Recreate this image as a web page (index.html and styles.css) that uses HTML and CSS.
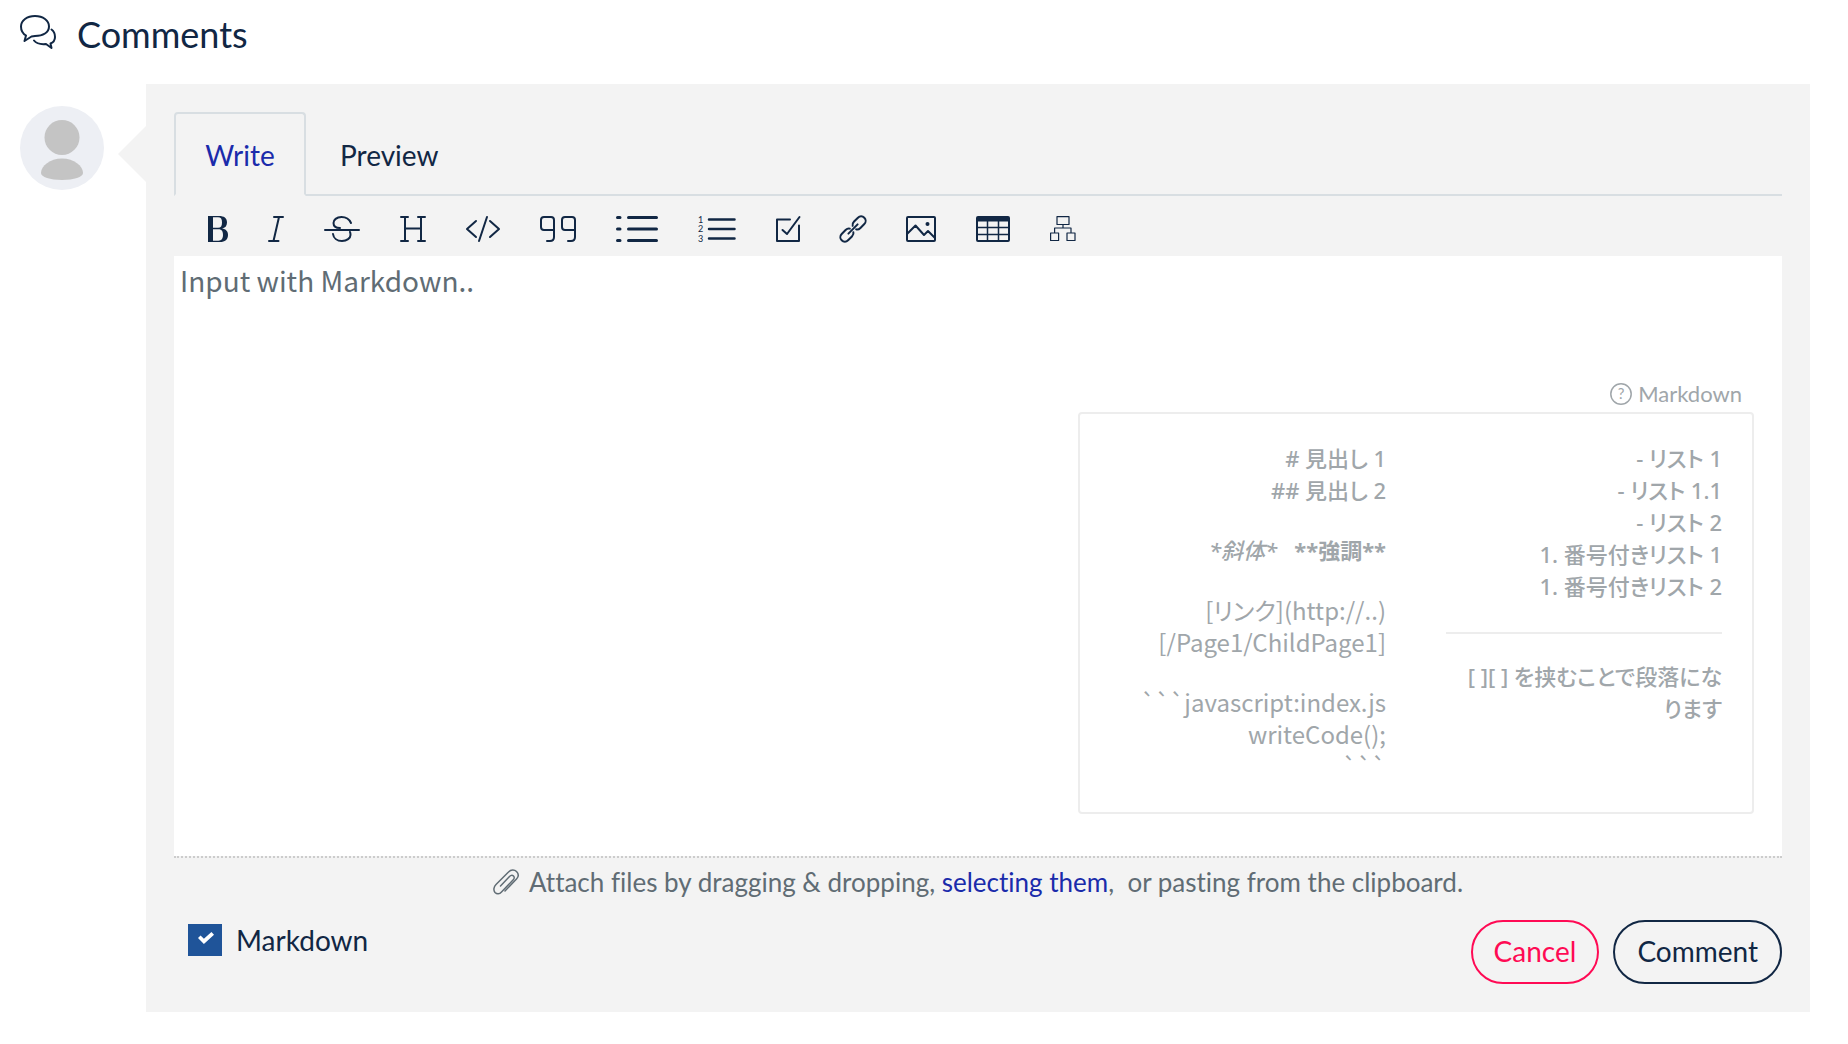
FILE: index.html
```html
<!DOCTYPE html>
<html lang="en">
<head>
<meta charset="utf-8">
<meta name="viewport" content="width=device-width, initial-scale=1">
<title>Comments</title>
<link rel="stylesheet" href="styles.css">
</head>
<body>
<main class="comments">
  <h1 class="comments-title">
    <svg class="icon" width="36" height="34" viewBox="0 0 36 34" stroke-width="2" aria-hidden="true">
      <path d="M6 20.5C2.5 18.5 1 15 1 11.500C1 5.500 7 1 15 1S29 5.500 29 11.500S23 21 15 21L11.500 21.500L4.500 26L6 20.500"/>
      <path d="M31.500 14.500C34.500 16.500 35 20 35 22C35 25 33 27.500 30.500 28.500L31.500 33L26 29C21 29.500 16 28 14 25.500"/>
    </svg>
    Comments
  </h1>
  <div class="comment-entry">
    <svg class="avatar" width="84" height="84" viewBox="0 0 84 84" role="img" aria-label="User">
      <circle cx="42" cy="42" r="42" fill="#edeff4"/>
      <circle cx="42" cy="31.500" r="17.500" fill="#c4c4c4"/>
      <path d="M42 52.500C54 52.500 63 60 63 67C63 71 54 74 42 74S21 71 21 67C21 60 30 52.500 42 52.500Z" fill="#c4c4c4"/>
    </svg>
    <form class="comment-form">
      <div class="tabs" role="tablist">
        <button type="button" class="tab tab-active" role="tab" aria-selected="true">Write</button>
        <button type="button" class="tab" role="tab" aria-selected="false">Preview</button>
      </div>
      <div class="toolbar" role="toolbar" aria-label="Formatting">
        <button type="button" class="tool" aria-label="Bold"><svg class="icon" width="20" height="26" viewBox="0 0 20 26"><path fill="currentColor" fill-rule="evenodd" stroke="none" d="M0 0H11C16 0 19 2 19 6.500C19 10 17 12 14 12.500C18 13 20 15.500 20 19C20 23.500 17 26 12 26H0ZM5 1.300H10C13 1.300 14 3 14 6.500C14 10 13 11.800 10 11.800H5ZM5 13.200H10.500C14 13.200 15 15.500 15 19C15 22.500 13.500 24.700 10.500 24.700H5Z"/></svg></button>
        <button type="button" class="tool" aria-label="Italic"><svg class="icon" width="16" height="26" viewBox="0 0 16 26" stroke-width="2"><path d="M6 1H15M1 25H10.500M11 1L5.500 25"/></svg></button>
        <button type="button" class="tool" aria-label="Strikethrough"><svg class="icon" width="36" height="26" viewBox="0 0 36 26" stroke-width="2"><path d="M1 14H35M27 7C25 2.500 21 1 17.500 1C12.500 1 9.500 4 9.500 7C9.500 10 12 12 16 12M9 18C9.500 22 13 25 18 25C23 25 26.500 22 26.500 19C26.500 18 26.500 17 26 16"/></svg></button>
        <button type="button" class="tool" aria-label="Heading"><svg class="icon" width="26" height="26" viewBox="0 0 26 26" stroke-width="2"><path d="M1 1H8M18 1H25M1 25H8M18 25H25M5 1V25M21 1V25M5 12.500H21"/></svg></button>
        <button type="button" class="tool" aria-label="Code"><svg class="icon" width="34" height="26" viewBox="0 0 34 26" stroke-width="2"><path d="M10 5L1 13L10 21M21 1L13 25M24 5L33 13L24 21"/></svg></button>
        <button type="button" class="tool" aria-label="Quote"><svg class="icon" width="36" height="26" viewBox="0 0 36 26" stroke-width="2"><path d="M14 14H4Q1 14 1 11V4Q1 1 4 1H11Q14 1 14 4V21Q14 25 10 25H7M35 14H25Q22 14 22 11V4Q22 1 25 1H32Q35 1 35 4V21Q35 25 31 25H28"/></svg></button>
        <button type="button" class="tool" aria-label="Bulleted list"><svg class="icon" width="42" height="26" viewBox="0 0 42 26" stroke-width="3"><path d="M1.500 1.500H4M1.500 13H4M1.500 24.500H4M12.500 1.500H40.500M12.500 13H40.500M12.500 24.500H40.500"/></svg></button>
        <button type="button" class="tool" aria-label="Numbered list"><svg class="icon" width="38" height="26" viewBox="0 0 38 26" stroke-width="2.500"><path d="M11 3.500H36.500M11 13H36.500M11 22.500H36.500"/><g class="icon-digits"><text x="0" y="7">1</text><text x="0" y="16">2</text><text x="0" y="26">3</text></g></svg></button>
        <button type="button" class="tool" aria-label="Task list"><svg class="icon" width="24" height="26" viewBox="0 0 24 26" stroke-width="2"><path d="M14 3.500H1V25H23V9.500M6.500 14L11 18L23.500 1"/></svg></button>
        <button type="button" class="tool" aria-label="Link"><svg class="icon" width="26" height="26" viewBox="0 0 26 26" stroke-width="2"><path transform="translate(13 13) rotate(-45)" d="M2 -2.500Q3 -4.500 6 -4.500H11.500A4.500 4.500 0 0 1 11.500 4.500H6Q3 4.500 2 2.500M-2 -2.500Q-3 -4.500 -6 -4.500H-11.500A4.500 4.500 0 0 0 -11.500 4.500H-6Q-3 4.500 -2 2.500M-6.500 0H6.500"/></svg></button>
        <button type="button" class="tool" aria-label="Image"><svg class="icon" width="30" height="26" viewBox="0 0 30 26" stroke-width="2"><rect x="1" y="1" width="28" height="24" rx="1"/><path d="M1 18L9.500 9.500L18 19L22 15L29 22"/><circle cx="21.500" cy="8" r="2" fill="currentColor" stroke="none"/></svg></button>
        <button type="button" class="tool" aria-label="Table"><svg class="icon" width="34" height="26" viewBox="0 0 34 26" stroke-width="2"><rect x="1" y="1" width="32" height="24" rx="1"/><path stroke-width="1.500" d="M11.500 4V25M22.500 4V25M1 11.500H33M1 18.500H33"/><path stroke="none" fill="currentColor" d="M1 1H33V5.500H1Z"/></svg></button>
        <button type="button" class="tool" aria-label="Diagram"><svg class="icon" width="26" height="26" viewBox="0 0 26 26" stroke-width="1.200"><path d="M7 .600H19V8.500H7ZM.600 17H8.600V24.500H.600ZM17 17H25V24.500H17ZM13 8.500V12M4.600 17V12H21V17"/></svg></button>
      </div>
      <div class="editor">
        <textarea class="editor-input" aria-label="Comment" placeholder="Input with Markdown.."></textarea>
        <aside class="help">
          <div class="help-title">
            <svg class="icon" width="22" height="22" viewBox="0 0 22 22" stroke-width="1.500" aria-hidden="true"><circle cx="11" cy="11" r="10.200"/><text class="help-mark" x="11" y="16">?</text></svg>
            Markdown
          </div>
          <div class="help-box">
            <div class="help-col" lang="ja">
              <p># 見出し 1<br>## 見出し 2</p>
              <p><em>*斜体*</em>&nbsp;&nbsp; <strong>**強調**</strong></p>
              <p class="help-code">[リンク](http://..)<br>[/Page1/ChildPage1]</p>
              <p class="help-code">```javascript:index.js<br>writeCode();<br>```</p>
            </div>
            <div class="help-col" lang="ja">
              <p>- リスト 1<br>- リスト 1.1<br>- リスト 2<br>1. 番号付きリスト 1<br>1. 番号付きリスト 2</p>
              <hr>
              <p>[ ][ ] を挟むことで段落にな<span class="nowrap">ります</span></p>
            </div>
          </div>
        </aside>
      </div>
      <div class="attach">
        <svg class="icon" width="26" height="26" viewBox="0 0 26 26" stroke-width="1.500" aria-hidden="true"><path d="M12 22L23.500 10C25.800 7.500 25.500 4.500 23.500 2.500C21.500 .500 18 .300 15.500 3L3 15.500C.500 18 .300 21.500 2 23.500C4 25.500 6.500 25.300 8.500 23L20 11C21.500 9.500 21.500 8 20.500 7C19.500 6 18 6 16.500 7.500L7.500 17"/></svg>
        <span>Attach files by dragging &amp; dropping, <a href="#">selecting them</a>,&nbsp; or pasting from the clipboard.</span>
      </div>
      <div class="form-footer">
        <label class="markdown-toggle"><input type="checkbox" class="checkbox" checked>Markdown</label>
        <div class="actions">
          <button type="button" class="btn btn-cancel">Cancel</button>
          <button type="submit" class="btn">Comment</button>
        </div>
      </div>
    </form>
  </div>
</main>
</body>
</html>
```
FILE: styles.css
```css
* {
  box-sizing: border-box;
}

body {
  margin: 0;
  background: #fff;
  color: #112744;
  font-family: Lato, "Noto Sans CJK JP", sans-serif;
  font-size: 28px;
  font-variant-ligatures: none;
  line-height: 42px;
}

button,
textarea {
  margin: 0;
  font: inherit;
  color: inherit;
}

a {
  color: #1a2bab;
  text-decoration: none;
}

.icon {
  display: block;
  flex: none;
  overflow: visible;
  fill: none;
  stroke: currentColor;
  stroke-linecap: round;
  stroke-linejoin: round;
}

.comments {
  padding: 0 38px 32px 20px;
}

.comments-title {
  display: flex;
  align-items: flex-start;
  gap: 21px;
  margin: 0;
  padding: 15px 0 31px;
  font-size: 36px;
  font-weight: 400;
  line-height: 38px;
}

.comment-entry {
  display: grid;
  grid-template-columns: 84px 1fr;
  gap: 42px;
}

.avatar {
  margin-top: 22px;
}

.comment-form {
  position: relative;
  min-width: 0;
  padding: 28px;
  background: #f3f3f3;
}

.comment-form::before {
  content: "";
  position: absolute;
  top: 42px;
  left: -28px;
  border: 28px solid transparent;
  border-left-width: 0;
  border-right-color: #f3f3f3;
}

.tabs {
  display: flex;
}

.tabs::after {
  content: "";
  flex: 1;
  border-bottom: 2px solid #d8dee2;
}

.tab {
  padding: 22px 30px 18px 34px;
  border: 0;
  border-bottom: 2px solid #d8dee2;
  background: none;
}

.tab-active {
  min-width: 132px;
  padding: 20px 28px 18px;
  border: 2px solid #d8dee2;
  border-bottom-color: transparent;
  border-radius: 4px 4px 0 0;
  color: #1a2bab;
}

.toolbar {
  display: flex;
  flex-wrap: wrap;
  gap: 40px;
  padding: 20px 34px 14px;
}

.tool {
  padding: 0;
  border: 0;
  background: none;
}

.icon-digits {
  fill: currentColor;
  stroke: none;
  font-size: 9px;
}

.editor {
  position: relative;
  border-bottom: 2px dotted #ccc;
}

.editor-input {
  display: block;
  width: 100%;
  height: 600px;
  padding: 3px 6px;
  border: 0;
  outline: 0;
  resize: none;
  background: #fff;
  font-family: "Noto Sans CJK JP", sans-serif;
}

.editor-input::placeholder {
  color: #606c74;
  opacity: 1;
}

.help {
  position: absolute;
  right: 28px;
  bottom: 42px;
  width: 676px;
  color: #a0a6aa;
  font-size: 22px;
  line-height: 32px;
}

.help-title {
  display: flex;
  justify-content: flex-end;
  align-items: center;
  gap: 6px;
  padding: 0 12px 2px 0;
}

.help-mark {
  fill: currentColor;
  stroke: none;
  font-size: 15px;
  text-anchor: middle;
}

.help-box {
  display: grid;
  grid-template-columns: 1fr 1fr;
  gap: 60px;
  padding: 28px 30px 2px;
  border: 2px solid #ededed;
  border-radius: 4px;
  font-family: "Noto Sans", "Noto Sans CJK JP", sans-serif;
  font-feature-settings: "palt";
  font-weight: 500;
  text-align: right;
}

.help-col p {
  margin: 0 0 28px;
}

.help-col .help-code {
  font-family: "Noto Sans CJK JP", sans-serif;
  font-size: 24px;
  font-weight: 400;
}

.help-col hr {
  margin: 30px 0 26px;
  border: 0;
  border-top: 2px solid #ededed;
}

.nowrap {
  white-space: nowrap;
}

.attach {
  display: flex;
  justify-content: center;
  align-items: center;
  gap: 10px;
  padding: 3px 0 5px;
  color: #606c74;
  font-size: 26px;
}

.form-footer {
  display: flex;
  justify-content: space-between;
  align-items: flex-start;
  padding-top: 12px;
}

.markdown-toggle {
  display: flex;
  align-items: center;
  gap: 14px;
  padding-left: 14px;
  line-height: 40px;
}

.checkbox {
  display: block;
  width: 34px;
  height: 32px;
  margin: 0;
  padding: 8px 10px;
  appearance: none;
  background: #1f5499;
}

.checkbox:checked::before {
  content: "";
  display: block;
  width: 16px;
  height: 12px;
  background: #fff;
  clip-path: polygon(0 50%, 16% 30%, 37% 56%, 84% 0, 100% 22%, 37% 100%);
}

.actions {
  display: flex;
  gap: 14px;
}

.btn {
  height: 64px;
  padding: 0 22px 2px;
  border: 2px solid #112744;
  border-radius: 32px;
  background: none;
}

.btn-cancel {
  padding: 0 21px 2px;
  border-color: #ff0a54;
  color: #ff0a54;
}
```
